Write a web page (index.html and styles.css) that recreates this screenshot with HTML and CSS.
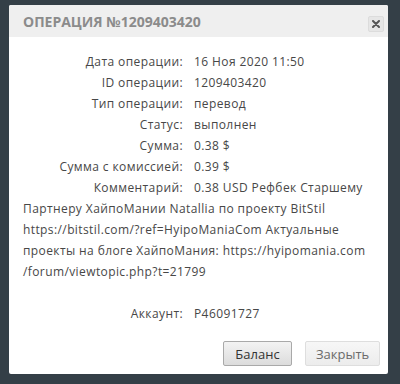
FILE: index.html
```html
<!DOCTYPE html>
<html lang="ru">
<head>
<meta charset="utf-8">
<title>Операция</title>
<link rel="stylesheet" href="styles.css">
</head>
<body>
<div class="modal">
  <div class="modal-header">
    <div class="modal-title">Операция №1209403420</div>
    <button class="close" type="button" aria-label="Закрыть">
      <svg width="8" height="8" viewBox="0 0 8 8"><path d="M1 1 L7 7 M7 1 L1 7" stroke="#555" stroke-width="2" stroke-linecap="round"/></svg>
    </button>
  </div>
  <div class="modal-body">
    <div class="row"><span class="label">Дата операции:</span><span class="value">16 Ноя 2020 11:50</span></div>
    <div class="row"><span class="label">ID операции:</span><span class="value">1209403420</span></div>
    <div class="row"><span class="label">Тип операции:</span><span class="value">перевод</span></div>
    <div class="row"><span class="label">Статус:</span><span class="value">выполнен</span></div>
    <div class="row"><span class="label">Сумма:</span><span class="value">0.38 $</span></div>
    <div class="row"><span class="label">Сумма с комиссией:</span><span class="value">0.39 $</span></div>
    <div class="row"><span class="label">Комментарий:</span><span class="value">0.38 USD Рефбек Старшему</span> <span class="value">Партнеру ХайпоМании Natallia по проекту BitStil https://bitstil.com/?ref=HyipoManiaCom Актуальные проекты на блоге ХайпоМания: https://hyipomania.com /forum/viewtopic.php?t=21799</span></div>
    <div class="row row-account"><span class="label">Аккаунт:</span><span class="value">P46091727</span></div>
  </div>
  <div class="modal-footer">
    <button class="btn btn-primary" type="button">Баланс</button>
    <button class="btn btn-muted" type="button">Закрыть</button>
  </div>
</div>
</body>
</html>
```
FILE: styles.css
```css
html, body {
  margin: 0;
  padding: 0;
}
body {
  background: #343f47;
  width: 400px;
  height: 384px;
  overflow: hidden;
  font-family: "Open Sans", "Liberation Sans", sans-serif;
}
.modal {
  margin: 5px 0 0 9px;
  width: 379px;
  height: 369px;
  background: #fff;
  border-radius: 2px;
  box-sizing: border-box;
  display: flex;
  flex-direction: column;
}
.modal-header {
  height: 32px;
  background: #efefef;
  display: flex;
  align-items: center;
  justify-content: space-between;
  padding: 0 4px 0 14px;
  border-radius: 2px 2px 0 0;
}
.modal-title {
  font-weight: 700;
  font-size: 14px;
  letter-spacing: 0;
  text-transform: uppercase;
  color: #8b8b8b;
}
.close {
  width: 16px;
  height: 16px;
  padding: 0;
  border: 1px solid #dcdcdc;
  background: #e6e6e6;
  border-radius: 2px;
  display: flex;
  align-items: center;
  justify-content: center;
  margin-top: 6px;
}
.modal-body {
  padding: 14px 14px 0 14px;
  font-size: 12px;
  line-height: 21px;
  letter-spacing: 0.4px;
  color: #474747;
}
.label {
  display: inline-block;
  width: 160px;
  text-align: right;
  margin-right: 11px;
}
.row-account {
  margin-top: 21px;
}
.modal-footer {
  display: flex;
  justify-content: flex-end;
  gap: 13px;
  padding: 17px 8px 0 0;
}
.btn {
  height: 25px;
  padding: 0 10px;
  font-family: "Open Sans", "Liberation Sans", sans-serif;
  font-size: 13px;
  border-radius: 2px;
}
.btn-primary {
  width: 69px;
  color: #333;
  border: 1px solid #a9a9a9;
  background: linear-gradient(#f3f3f3, #dcdcdc);
}
.btn-muted {
  width: 75px;
  color: #6a6a6a;
  border: 1px solid #dedede;
  background: linear-gradient(#f7f7f7, #ececec);
}
```
